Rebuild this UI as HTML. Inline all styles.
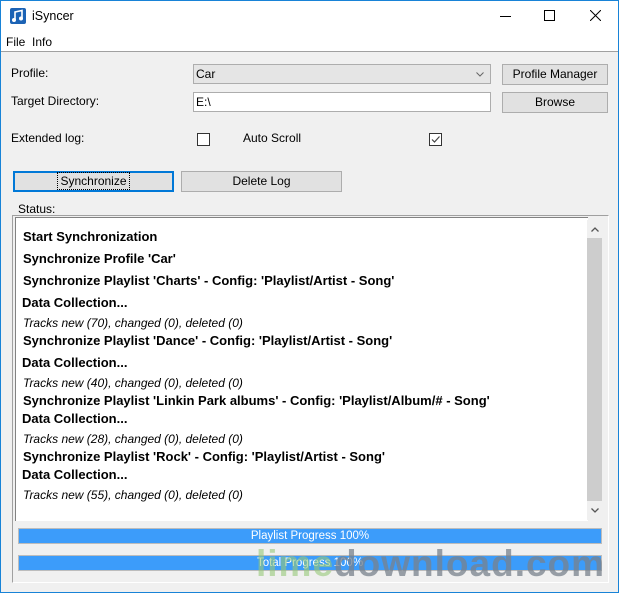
<!DOCTYPE html><html><head><style>
body{margin:0;width:619px;height:593px;overflow:hidden;font-family:"Liberation Sans",sans-serif;font-size:12px;color:#000;}
.win{position:absolute;left:0;top:0;width:617px;height:591px;border:1px solid #1883d7;background:#f0f0f0;}
.tb{position:absolute;left:0;top:0;width:617px;height:31px;background:#fff;}
.mb{position:absolute;left:0;top:31px;width:617px;height:19px;background:#fff;border-bottom:1px solid #a0a0a0;}
.a{position:absolute;}
.btn{position:absolute;background:#e1e1e1;border:1px solid #adadad;text-align:center;box-sizing:border-box;}
.log div{position:absolute;left:7px;white-space:nowrap;}
.b{font-weight:bold;font-size:13px;}
.i{font-style:italic;font-size:12px;}
.pb{position:absolute;left:17px;width:584px;height:16px;border:1px solid #bcbcbc;box-sizing:border-box;background:#3c9cfa;color:#fff;text-align:center;line-height:14px;font-size:11.5px;}
</style></head><body><div class="win">
<div class="tb">
<svg class="a" style="left:9px;top:7px" width="16" height="16"><rect width="16" height="16" rx="2" fill="#1c63b5"/><path d="M5 12V4l7-1.5v8" stroke="#fff" stroke-width="1.6" fill="none"/><circle cx="4" cy="12" r="2" fill="#fff"/><circle cx="11" cy="10.5" r="2" fill="#fff"/></svg>
<div class="a" style="left:31px;top:8px;font-size:12.5px">iSyncer</div>
<div class="a" style="left:499px;top:15px;width:11px;height:1px;background:#000"></div>
<div class="a" style="left:543px;top:9px;width:9px;height:9px;border:1px solid #000"></div>
<svg class="a" style="left:589px;top:9px" width="11" height="11"><path d="M0 0L11 11M11 0L0 11" stroke="#000" stroke-width="1"/></svg>
</div>
<div class="mb"><span class="a" style="left:5px;top:3px">File</span><span class="a" style="left:31px;top:3px">Info</span></div>
<div class="a" style="left:10px;top:65px">Profile:</div>
<div class="a" style="left:10px;top:93px">Target Directory:</div>
<div class="a" style="left:10px;top:130px">Extended log:</div>
<div class="a" style="left:192px;top:63px;width:298px;height:20px;box-sizing:border-box;border:1px solid #adadad;background:#e5e5e5;padding:2px 2px">Car<svg class="a" style="right:6px;top:7px" width="8" height="5"><path d="M0.5 0.5L4 4L7.5 0.5" stroke="#666" fill="none"/></svg></div>
<div class="a" style="left:192px;top:91px;width:298px;height:20px;box-sizing:border-box;border:1px solid #adadad;background:#fff;padding:2px 2px">E:\</div>
<div class="btn" style="left:501px;top:63px;width:106px;height:21px;line-height:18px">Profile Manager</div>
<div class="btn" style="left:501px;top:91px;width:106px;height:21px;line-height:18px">Browse</div>
<div class="a" style="left:196px;top:132px;width:11px;height:11px;border:1px solid #333;background:#fff"></div>
<div class="a" style="left:242px;top:130px">Auto Scroll</div>
<div class="a" style="left:428px;top:132px;width:11px;height:11px;border:1px solid #333;background:#fff"><svg width="11" height="11" style="display:block"><path d="M2 5.5L4.5 8L9.5 2.5" stroke="#444" fill="none" stroke-width="1.2"/></svg></div>
<div class="btn" style="left:12px;top:170px;width:161px;height:21px;line-height:17px;border:2px solid #0078d7"><span style="outline:1px dotted #000;outline-offset:1px;padding:0 1px">Synchronize</span></div>
<div class="btn" style="left:180px;top:170px;width:161px;height:21px;line-height:18px">Delete Log</div>
<div class="a" style="left:17px;top:201px">Status:</div>
<div class="a" style="left:11px;top:214px;width:595px;height:366px;border-left:1px solid #a0a0a0;border-top:1px solid #a0a0a0;border-right:1px solid #fff;border-bottom:1px solid #fff"></div>
<div class="a log" style="left:14px;top:216px;width:572px;height:303px;background:#fff;border-top:1px solid #828282;border-left:1px solid #828282">
<div class="b" style="top:11px">Start Synchronization</div>
<div class="b" style="top:33px">Synchronize Profile 'Car'</div>
<div class="b" style="top:55px">Synchronize Playlist 'Charts' - Config: 'Playlist/Artist - Song'</div>
<div class="b" style="top:77px;left:6px">Data Collection...</div>
<div class="i" style="top:98px">Tracks new (70), changed (0), deleted (0)</div>
<div class="b" style="top:115px">Synchronize Playlist 'Dance' - Config: 'Playlist/Artist - Song'</div>
<div class="b" style="top:137px;left:6px">Data Collection...</div>
<div class="i" style="top:158px">Tracks new (40), changed (0), deleted (0)</div>
<div class="b" style="top:175px">Synchronize Playlist 'Linkin Park albums' - Config: 'Playlist/Album/# - Song'</div>
<div class="b" style="top:193px;left:6px">Data Collection...</div>
<div class="i" style="top:214px">Tracks new (28), changed (0), deleted (0)</div>
<div class="b" style="top:231px">Synchronize Playlist 'Rock' - Config: 'Playlist/Artist - Song'</div>
<div class="b" style="top:249px;left:6px">Data Collection...</div>
<div class="i" style="top:270px">Tracks new (55), changed (0), deleted (0)</div>
</div>
<div class="a" style="left:586px;top:219px;width:16px;height:300px;background:#f0f0f0"></div>
<div class="a" style="left:586px;top:237px;width:15px;height:263px;background:#cdcdcd"></div>
<svg class="a" style="left:590px;top:226px" width="8" height="5"><path d="M0.5 4.5L4 1L7.5 4.5" stroke="#555" fill="none" stroke-width="1.3"/></svg>
<svg class="a" style="left:590px;top:507px" width="8" height="5"><path d="M0.5 0.5L4 4L7.5 0.5" stroke="#555" fill="none" stroke-width="1.3"/></svg>
<div class="pb" style="top:527px">Playlist Progress 100%</div>
<div class="pb" style="top:554px">Total Progress 100%</div>
<div class="a" style="left:255px;top:542px;font-size:37px;font-weight:bold;color:rgba(120,130,140,0.75);white-space:nowrap;letter-spacing:1px"><span style="color:rgba(150,200,120,0.6)">lime</span>download.com</div>
</div></body></html>
